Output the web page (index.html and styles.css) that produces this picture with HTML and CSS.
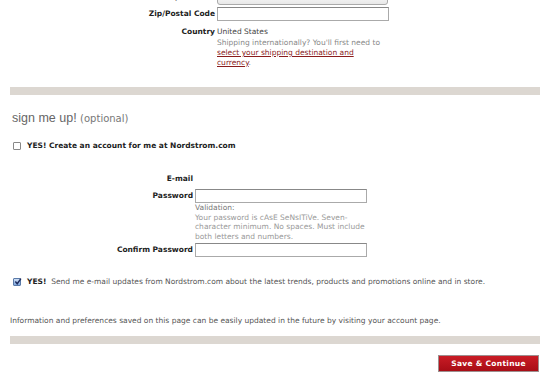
FILE: index.html
```html
<!DOCTYPE html>
<html lang="en">
<head>
    <meta charset="UTF-8">
    <title>Sign me up</title>
    <link rel="stylesheet" href="styles.css">
</head>
<body>
    <div class="address">
        <div class="field">
            <label class="label">State/Province</label>
            <div class="select"><span class="arrows">&#9662;</span></div>
        </div>
        <div class="field field-zip">
            <label class="label">Zip/Postal Code</label>
            <input class="text-input" type="text">
        </div>
        <div class="field field-country">
            <span class="label">Country</span>
            <span class="value">United States</span>
        </div>
        <p class="ship-note">
            Shipping internationally? You'll first need to<br>
            <a href="#">select your shipping destination and<br>currency</a>.
        </p>
    </div>

    <div class="divider"></div>

    <h2 class="section-title">sign me up! <small>(optional)</small></h2>

    <div class="check-row check-create">
        <span class="box"></span>
        <strong>YES! Create an account for me at Nordstrom.com</strong>
    </div>

    <div class="account">
        <div class="field field-email">
            <span class="label">E-mail</span>
        </div>
        <div class="field field-password">
            <label class="label">Password</label>
            <input class="text-input" type="password">
        </div>
        <div class="hint">
            <span class="hint-title">Validation:</span><br>
            Your password is cAsE SeNsITiVe. Seven-<br>
            character minimum. No spaces. Must include<br>
            both letters and numbers.
        </div>
        <div class="field field-confirm">
            <label class="label">Confirm Password</label>
            <input class="text-input" type="password">
        </div>
    </div>

    <div class="check-row check-news">
        <span class="box box-checked">
            <svg width="9" height="9" viewBox="0 0 9 9"><path d="M1.5 4.5 L3.6 7 L7.8 1.2" fill="none" stroke="#1d2a5c" stroke-width="1.6"/></svg>
        </span>
        <span><strong>YES!</strong>&nbsp; Send me e-mail updates from Nordstrom.com about the latest trends, products and promotions online and in store.</span>
    </div>

    <p class="info">Information and preferences saved on this page can be easily updated in the future by visiting your account page.</p>

    <div class="divider divider-bottom"></div>

    <div class="actions">
        <button class="btn-save" type="button">Save &amp; Continue</button>
    </div>
</body>
</html>
```

FILE: styles.css
```css
body {
    font-family: "DejaVu Sans", Verdana, sans-serif;
    font-size: 7.5px;
    line-height: 10px;
    color: #555;
    margin: 0;
    background: #fff;
}
.address {
    margin-top: -9px;
}
.field {
    display: flex;
    align-items: center;
}
.label {
    width: 215px;
    margin-right: 2px;
    text-align: right;
    font-weight: bold;
    color: #222;
    flex-shrink: 0;
}
.select {
    width: 169px;
    height: 12px;
    border: 1px solid #aaa;
    border-radius: 3px;
    background: linear-gradient(#fff, #e8e8e8);
    position: relative;
}
.arrows {
    position: absolute;
    right: 4px;
    top: 1px;
    font-size: 7px;
    color: #444;
}
.text-input {
    box-sizing: border-box;
    width: 172px;
    height: 14px;
    margin: 0;
    padding: 0;
    border: 1px solid #aaa;
    border-top-color: #888;
    background: #fff;
}
.field-zip {
    margin-top: 2px;
}
.field-country {
    margin-top: 6px;
}
.field-country .value {
    color: #444;
}
.ship-note {
    margin: 1px 0 0 217px;
    color: #888;
}
.ship-note a {
    color: #8a1c1c;
}
.divider {
    height: 8px;
    margin: 19px 10px 0;
    background: #dcd7d1;
}
.section-title {
    margin: 15px 0 0 12px;
    font-family: "Liberation Sans", Arial, sans-serif;
    font-weight: normal;
    font-size: 12.5px;
    line-height: 16px;
    color: #666;
}
.section-title small {
    font-family: "DejaVu Sans", Verdana, sans-serif;
    font-size: 10px;
    color: #777;
}
.check-row {
    display: flex;
    align-items: center;
    padding-left: 13px;
}
.check-row strong {
    color: #222;
}
.box {
    box-sizing: border-box;
    width: 8px;
    height: 8px;
    margin-right: 6px;
    border: 1px solid #888;
    border-radius: 1px;
    background: #fff;
    flex-shrink: 0;
    display: flex;
    align-items: center;
    justify-content: center;
}
.box-checked {
    background: linear-gradient(#cfe0f6, #7fa7de);
    border-color: #5a7aa8;
}
.box-checked svg {
    margin-top: -2px;
    margin-right: -2px;
}
.check-create {
    margin-top: 14px;
}
.account {
    margin-top: 23px;
}
.account .label {
    width: 193px;
}
.field-password {
    margin-top: 5px;
}
.hint {
    margin: 0 0 0 195px;
    line-height: 9.5px;
    color: #999;
}
.hint-title {
    color: #777;
}
.field-confirm {
    margin-top: 2px;
}
.check-news {
    margin-top: 20px;
}
.info {
    margin: 29px 0 0 10px;
}
.divider-bottom {
    margin-top: 10px;
}
.actions {
    display: flex;
    justify-content: flex-end;
    padding: 11px 11px 0 0;
}
.btn-save {
    width: 101px;
    height: 17px;
    padding: 0;
    border: 1px solid #9d8f8f;
    background: linear-gradient(#c91c25, #a80d16);
    color: #fff;
    font-family: "DejaVu Sans", sans-serif;
    font-size: 7.5px;
    font-weight: bold;
    letter-spacing: 0.3px;
}
```
